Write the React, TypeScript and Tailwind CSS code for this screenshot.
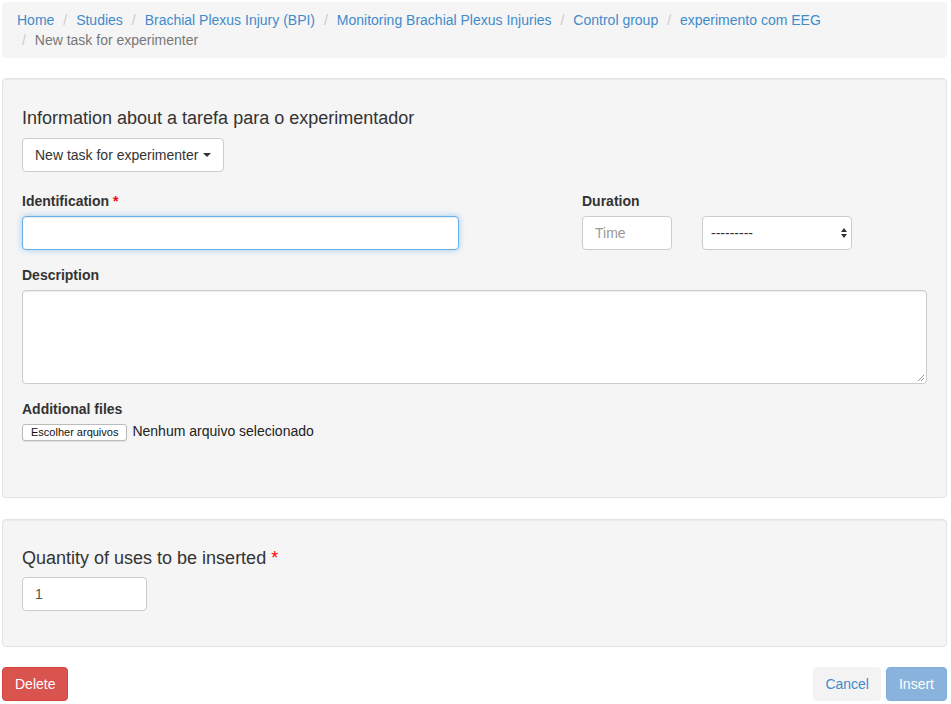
import React from "react";

const crumbs = [
  "Home",
  "Studies",
  "Brachial Plexus Injury (BPI)",
  "Monitoring Brachial Plexus Injuries",
  "Control group",
  "experimento com EEG",
];

function Sep() {
  return <span className="px-[5px] text-[#ccc]">/&nbsp;</span>;
}

export default function App() {
  return (
    <div
      className="min-h-[704px] bg-white text-[14px] leading-[20px] text-[#333]"
      style={{ fontFamily: '"Liberation Sans", Arial, sans-serif' }}
    >
      <div className="ml-[2px] w-[945px] pt-[2px]">
        {/* Breadcrumb */}
        <div className="rounded-[4px] bg-[#f5f5f5] px-[15px] py-[8px]">
          <div className="flex flex-wrap">
            {crumbs.map((c, i) => (
              <span key={c} className="mr-[4px] whitespace-nowrap">
                {i > 0 && <Sep />}
                <span className="text-[#428bca]">{c}</span>
              </span>
            ))}
            <span className="whitespace-nowrap">
              <Sep />
              <span className="text-[#777]">New task for experimenter</span>
            </span>
          </div>
        </div>

        {/* Panel 1 */}
        <div className="mt-[20px] rounded-[4px] border border-[#e3e3e3] bg-[#f5f5f5] p-[19px] shadow-[inset_0_1px_1px_rgba(0,0,0,0.05)]">
          <h4 className="mt-[10px] mb-[10px] text-[18px] font-medium leading-[20px] text-[#333]">
            Information about a tarefa para o experimentador
          </h4>
          <button className="flex h-[34px] items-center whitespace-nowrap rounded-[4px] border border-[#ccc] bg-white px-[12px] text-[14px] text-[#333]">
            New task for experimenter
            <span className="ml-[5px] inline-block h-0 w-0 border-x-[4px] border-t-[4px] border-x-transparent border-t-[#333]" />
          </button>

          <div className="mt-[19px] flex">
            <div className="w-[437px]">
              <div className="mb-[5px] font-bold">
                Identification <span className="text-[#f00]">*</span>
              </div>
              <div className="h-[34px] w-full rounded-[4px] border border-[#66afe9] bg-white shadow-[inset_0_1px_1px_rgba(0,0,0,0.075),0_0_6px_rgba(102,175,233,0.6)]" />
            </div>
            <div className="ml-[123px]">
              <div className="mb-[5px] font-bold">Duration</div>
              <div className="flex">
                <div className="flex h-[34px] w-[90px] items-center rounded-[4px] border border-[#ccc] bg-white px-[12px] text-[#999]">
                  Time
                </div>
                <div className="ml-[30px] flex h-[34px] w-[150px] items-center justify-between rounded-[4px] border border-[#ccc] bg-white pl-[8px] pr-[3px] text-[#333]">
                  <span>---------</span>
                  <svg width="8" height="14" viewBox="0 0 8 14">
                    <path d="M4 2 L7 6 L1 6 Z" fill="#333" />
                    <path d="M4 12 L7 8 L1 8 Z" fill="#333" />
                  </svg>
                </div>
              </div>
            </div>
          </div>

          <div className="mt-[15px]">
            <div className="mb-[5px] font-bold">Description</div>
            <div className="relative h-[94px] w-full rounded-[4px] border border-[#ccc] bg-white shadow-[inset_0_1px_1px_rgba(0,0,0,0.075)]">
              <svg className="absolute right-[1px] bottom-[1px]" width="8" height="8" viewBox="0 0 8 8">
                <path d="M7 1 L1 7 M7 4 L4 7" stroke="#999" strokeWidth="1" />
              </svg>
            </div>
          </div>

          <div className="mt-[15px]">
            <div className="mb-[5px] font-bold">Additional files</div>
            <div className="flex items-center">
              <span className="flex h-[17px] items-center rounded-[3px] border border-[#bbb] bg-white px-[8px] text-[11px] leading-[15px] text-[#111] shadow-[0_1px_0_rgba(0,0,0,0.08)]">
                Escolher arquivos
              </span>
              <span className="ml-[5px] -mt-[4px] text-[14px] text-[#222]">Nenhum arquivo selecionado</span>
            </div>
          </div>
          <div className="h-[37px]" />
        </div>

        {/* Panel 2 */}
        <div className="mt-[21px] rounded-[4px] border border-[#e3e3e3] bg-[#f5f5f5] px-[19px] pt-[19px] pb-[35px] shadow-[inset_0_1px_1px_rgba(0,0,0,0.05)]">
          <h4 className="mt-[9px] mb-[9px] text-[18px] font-medium leading-[20px] text-[#333]">
            Quantity of uses to be inserted <span className="text-[#f00]">*</span>
          </h4>
          <div className="flex h-[34px] w-[125px] items-center rounded-[4px] border border-[#ccc] bg-white px-[12px] text-[#555]">
            1
          </div>
        </div>

        {/* Buttons */}
        <div className="mt-[20px] flex items-center justify-between">
          <button className="h-[34px] rounded-[4px] border border-[#d43f3a] bg-[#d9534f] px-[12px] text-white">
            Delete
          </button>
          <div className="flex gap-[5px]">
            <button className="h-[34px] rounded-[4px] bg-[#f3f3f3] px-[12px] text-[#428bca]">Cancel</button>
            <button className="h-[34px] rounded-[4px] border border-[#7fadd9] bg-[#89b3dc] px-[12px] text-white">
              Insert
            </button>
          </div>
        </div>
      </div>
    </div>
  );
}
